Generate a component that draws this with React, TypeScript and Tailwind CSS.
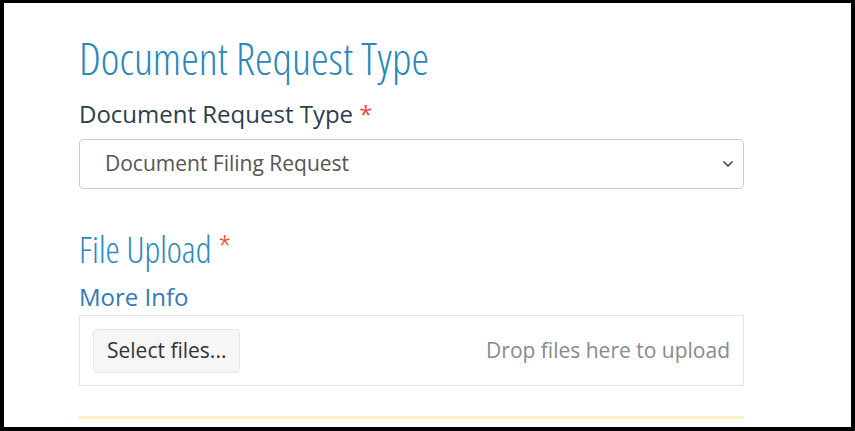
import { ChevronDown } from "lucide-react";

export default function App() {
  return (
    <div className="h-[431px] w-[855px] overflow-hidden border-x-4 border-t-[3px] border-b-4 border-black bg-white font-['Open_Sans',sans-serif]">
      <div className="w-[665px] pl-[75px] box-content">
        <h1 className="mt-[30px] text-[44.5px] font-light leading-[50px] text-[#2a87ba] [font-stretch:75%]">
          Document Request Type
        </h1>

        <label className="mt-[16px] block text-[24px] leading-[30px] text-[#2c3e50]">
          Document Request Type <span className="text-[#e74c3c]">*</span>
        </label>

        <div className="relative mt-[10px] flex h-[50px] items-center rounded border border-[#ccc] bg-white pl-[25px] pr-4">
          <span className="text-[21px] text-[#555]">Document Filing Request</span>
          <ChevronDown className="absolute right-[7px] top-1/2 h-4 w-4 -translate-y-1/2 text-[#444]" strokeWidth={2.5} />
        </div>

        <h2 className="mt-[39px] text-[36px] font-light leading-[44px] text-[#2a87ba] [font-stretch:75%]">
          File Upload <span className="text-[#e74c3c]">*</span>
        </h2>

        <a className="mt-[10px] block text-[24px] leading-[30px] text-[#337ab7]">More Info</a>

        <div className="mt-[3px] flex h-[71px] items-center justify-between border border-[#e5e5e5] px-[13px]">
          <button className="h-[44px] rounded border border-[#e6e6e6] bg-[#f6f6f6] px-[13px] text-[21px] text-[#333]">
            Select files...
          </button>
          <span className="text-[21px] text-[#8a8a8a]">Drop files here to upload</span>
        </div>

        <div className="mt-[30px] h-[3px] bg-[#fbf1c2]" />
      </div>
    </div>
  );
}
